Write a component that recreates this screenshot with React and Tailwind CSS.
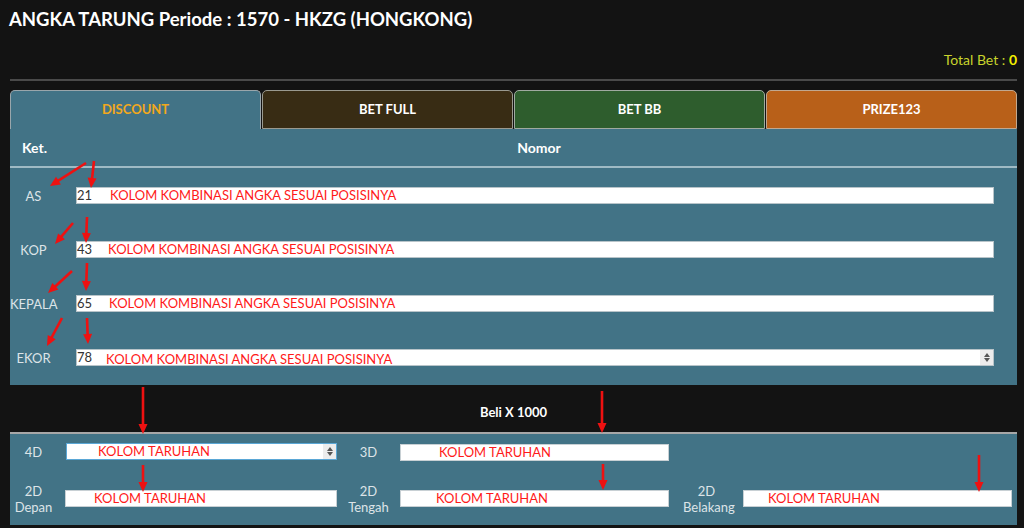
import React from "react";

const RED = "#ee1111";

function Arrow({ x1, y1, x2, y2 }) {
  const dx = x2 - x1;
  const dy = y2 - y1;
  const len = Math.sqrt(dx * dx + dy * dy);
  const ux = dx / len;
  const uy = dy / len;
  const hl = 10;
  const hw = 4.5;
  const bx = x2 - ux * hl;
  const by = y2 - uy * hl;
  const px = -uy;
  const py = ux;
  const pts = `${x2},${y2} ${bx + px * hw},${by + py * hw} ${bx - px * hw},${by - py * hw}`;
  return (
    <g>
      <line x1={x1} y1={y1} x2={bx + ux * 1} y2={by + uy * 1} stroke={RED} strokeWidth="2.6" />
      <polygon points={pts} fill={RED} />
    </g>
  );
}

const arrows = [
  [86, 163, 50, 186],
  [94, 161, 91, 188],
  [73, 223, 55, 244],
  [87, 217, 86, 243],
  [72, 271, 48, 293],
  [87, 263, 86, 291],
  [62, 318, 47, 346],
  [87, 318, 88, 344],
  [143, 387, 143, 434],
  [143, 465, 143, 492],
  [602, 391, 602, 433],
  [603, 464, 603, 490],
  [979, 455, 979, 492],
];

function Spinner() {
  return (
    <div className="ml-auto flex h-full w-[13px] flex-col items-center justify-center gap-[1px] bg-[#ececec]">
      <div className="h-0 w-0 border-x-[3.5px] border-b-[4px] border-x-transparent border-b-[#555]" />
      <div className="h-0 w-0 border-x-[3.5px] border-t-[4px] border-x-transparent border-t-[#555]" />
    </div>
  );
}

function NumRow({ label, num, offset, spin, dy = 0 }) {
  return (
    <div className="flex h-[54px] items-start">
      <div className="w-[47px] pt-[1px] text-center text-[13px] leading-[17px] text-[#dde4e8]">
        {label}
      </div>
      <div className="ml-[19px] flex h-[17px] w-[918px] items-center border border-[#b8c4c9] bg-white">
        <span className="text-[13px] leading-[15px] text-[#333]">{num}</span>
        <span
          className={`whitespace-nowrap text-[13px] leading-[15px] text-[#ff1a1a] ${dy ? "translate-y-[2px]" : ""}`}
          style={{ marginLeft: offset }}
        >
          KOLOM KOMBINASI ANGKA SESUAI POSISINYA
        </span>
        {spin && <Spinner />}
      </div>
    </div>
  );
}

function BetInput({ width, offset, spin, focus }) {
  return (
    <div
      className={`flex h-[17px] items-center bg-white ${focus ? "border border-[#5aa7d6]" : "border border-[#c8d0d4]"}`}
      style={{ width }}
    >
      <span className="whitespace-nowrap text-[13px] leading-[15px] text-[#ff1a1a]" style={{ marginLeft: offset }}>
        KOLOM TARUHAN
      </span>
      {spin && <Spinner />}
    </div>
  );
}

export default function App() {
  return (
    <div className="relative h-[528px] w-[1024px] overflow-hidden bg-[#131313] font-['Lato',sans-serif]">
      <div className="pl-[10px] pr-[7px]">
        <h1 className="pt-[7px] text-[18.5px] font-bold leading-[24px] text-white -ml-[1px]">
          ANGKA TARUNG Periode : 1570 - HKZG (HONGKONG)
        </h1>
        <div className="mt-[21px] flex justify-end text-[14px] leading-[16px] text-[#c9d42c]">
          <span>
            Total Bet : <span className="font-bold text-[#f4f000]">0</span>
          </span>
        </div>
        <div className="mt-[11px] h-[2px] bg-[#4a4a4a]" />
        <div className="mt-[9px] grid grid-cols-4 gap-[1px]">
          <div className="flex h-[39px] items-center justify-center rounded-t-[5px] border-x border-t border-[#9aa6ab] bg-[#427386] text-[13px] font-bold text-[#f2a81d]">
            DISCOUNT
          </div>
          <div className="flex h-[39px] items-center justify-center rounded-t-[5px] border border-[#9a9a90] bg-[#382c14] text-[13px] font-bold text-white">
            BET FULL
          </div>
          <div className="flex h-[39px] items-center justify-center rounded-t-[5px] border border-[#a0aaa0] bg-[#2e5d2d] text-[13px] font-bold text-white">
            BET BB
          </div>
          <div className="flex h-[39px] items-center justify-center rounded-t-[5px] border border-[#c0a890] bg-[#b86019] text-[13px] font-bold text-white">
            PRIZE123
          </div>
        </div>
        <div className="h-[256px] bg-[#427386]">
          <div className="flex h-[37px] items-center text-[14px] font-bold text-white">
            <div className="w-[55px] pl-[12px]">Ket.</div>
            <div className="flex-1 text-center -ml-[4px]">Nomor</div>
          </div>
          <div className="h-[2px] bg-[#9fbac4]" />
          <div className="pt-[19px]">
            <NumRow label="AS" num="21" offset={18} />
            <NumRow label="KOP" num="43" offset={16} />
            <NumRow label="KEPALA" num="65" offset={17} />
            <NumRow label="EKOR" num="78" offset={14} spin dy />
          </div>
        </div>
        <div className="flex h-[47px] items-center justify-center pt-[8px] text-[13px] font-bold text-white">
          Beli X 1000
        </div>
        <div className="h-[2px] bg-[#a7a7a7]" />
        <div className="grid h-[91px] grid-cols-[335px_338px_1fr] grid-rows-[36px_1fr] bg-[#427386] text-[13px] leading-[16px] text-[#dde4e8]">
          <div className="flex items-start pt-[9px]">
            <div className="w-[47px] pt-[1px] text-center">4D</div>
            <div className="ml-[9px]">
              <BetInput width={271} offset={31} spin focus />
            </div>
          </div>
          <div className="flex items-start pt-[10px]">
            <div className="w-[47px] text-center">3D</div>
            <div className="ml-[8px]">
              <BetInput width={269} offset={38} />
            </div>
          </div>
          <div />
          <div className="flex items-center pt-[2px]">
            <div className="w-[47px] text-center">2D<br />Depan</div>
            <div className="ml-[8px]">
              <BetInput width={272} offset={28} />
            </div>
          </div>
          <div className="flex items-center pt-[2px]">
            <div className="w-[47px] text-center">2D<br />Tengah</div>
            <div className="ml-[8px]">
              <BetInput width={269} offset={35} />
            </div>
          </div>
          <div className="flex items-center pt-[2px]">
            <div className="w-[47px] whitespace-nowrap text-center">2D<br />Belakang</div>
            <div className="ml-[13px]">
              <BetInput width={269} offset={24} />
            </div>
          </div>
        </div>
      </div>
      <svg className="pointer-events-none absolute left-0 top-0" width="1024" height="528">
        {arrows.map((a, i) => (
          <Arrow key={i} x1={a[0]} y1={a[1]} x2={a[2]} y2={a[3]} />
        ))}
      </svg>
    </div>
  );
}
